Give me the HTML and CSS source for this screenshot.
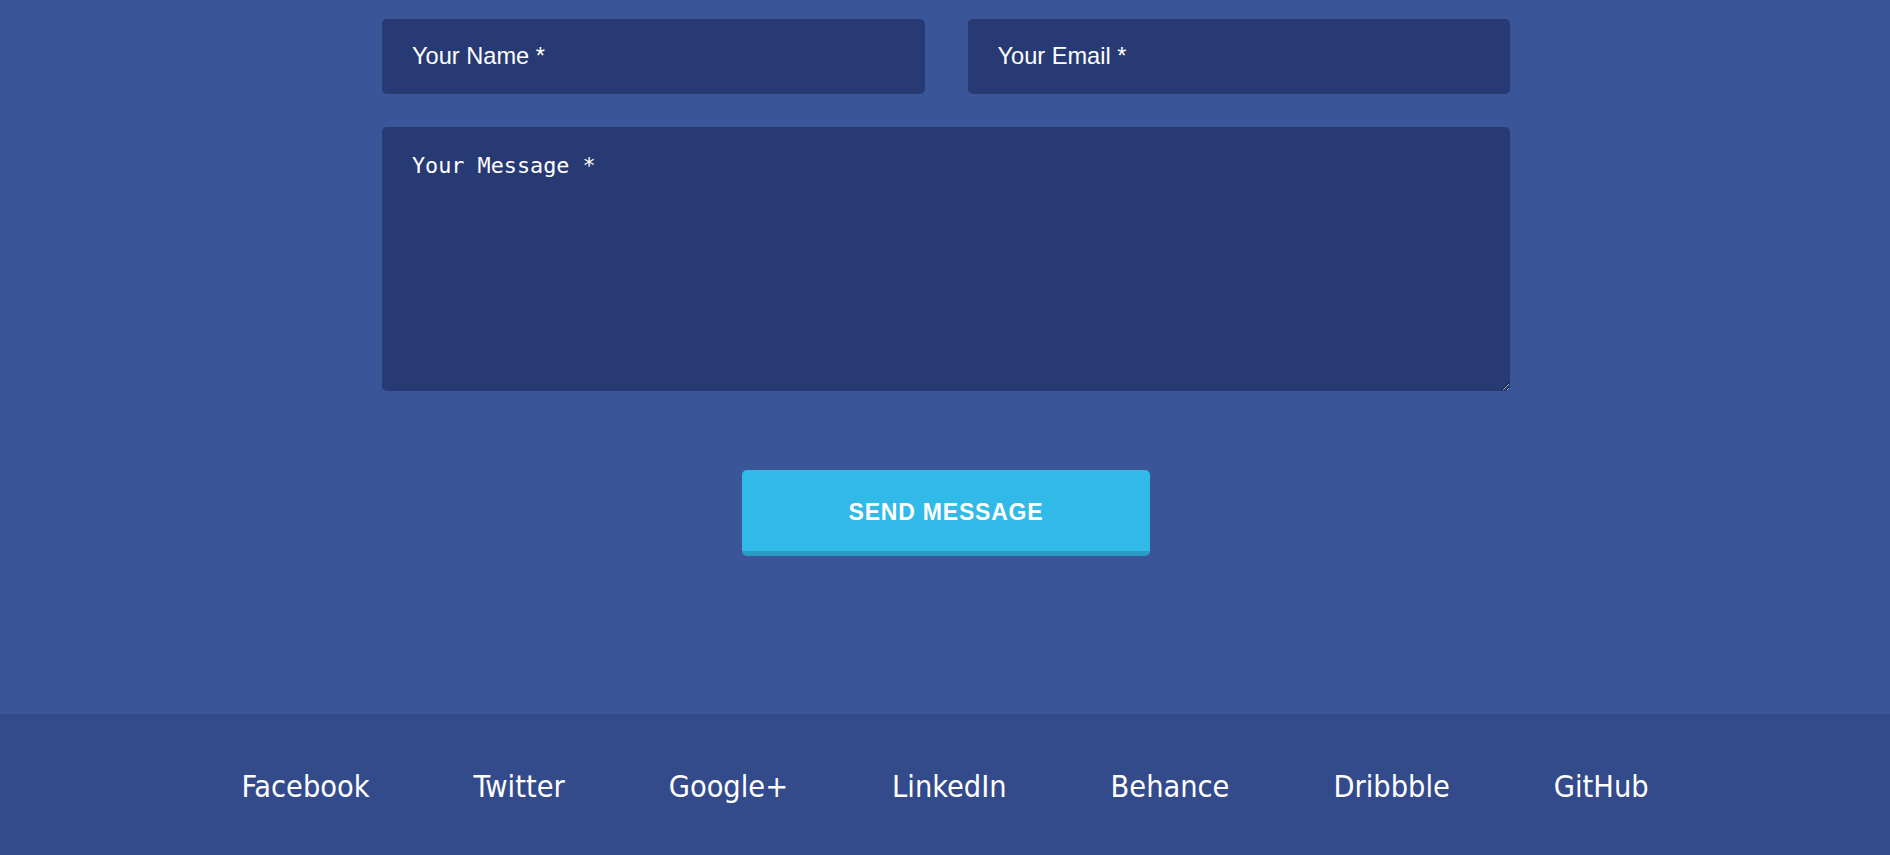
FILE: index.html
```html
<!DOCTYPE html>
<html lang="en">
<head>
<meta charset="utf-8">
<title>Contact</title>
<link rel="stylesheet" href="styles.css">
</head>
<body>
<main class="contact">
  <form class="contact-form">
    <div class="row">
      <input class="field" type="text" placeholder="Your Name *">
      <input class="field" type="email" placeholder="Your Email *">
    </div>
    <textarea class="message" placeholder="Your Message *"></textarea>
    <div class="actions">
      <button class="send" type="button">SEND MESSAGE</button>
    </div>
  </form>
</main>
<footer class="footer">
  <nav class="social">
    <a href="#">Facebook</a>
    <a href="#">Twitter</a>
    <a href="#">Google+</a>
    <a href="#">LinkedIn</a>
    <a href="#">Behance</a>
    <a href="#">Dribbble</a>
    <a href="#">GitHub</a>
  </nav>
</footer>
</body>
</html>
```
FILE: styles.css
```css
html, body {
  margin: 0;
  padding: 0;
}
body {
  background: #3b5599;
  font-family: "Liberation Sans", Arial, sans-serif;
  color: #fff;
  width: 1890px;
  height: 855px;
  overflow: hidden;
}
.contact {
  height: 714px;
  box-sizing: border-box;
  padding: 19px 0 0 2px;
}
.contact-form {
  width: 1128px;
  margin: 0 auto;
  display: flex;
  flex-direction: column;
}
.row {
  display: flex;
  gap: 43px;
}
.field {
  flex: 1;
  min-width: 0;
  height: 75px;
  box-sizing: border-box;
  border: none;
  border-radius: 5px;
  background: #283a73;
  color: #fff;
  padding: 0 30px;
  font-family: "Liberation Sans", Arial, sans-serif;
  font-size: 23.6px;
  outline: none;
}
.field::placeholder,
.message::placeholder {
  color: #fff;
  opacity: 1;
}
.message {
  margin-top: 33px;
  height: 264px;
  box-sizing: border-box;
  border: none;
  border-radius: 5px;
  background: #283a73;
  color: #fff;
  padding: 26px 30px;
  font-family: "DejaVu Sans Mono", monospace;
  font-size: 21.8px;
  outline: none;
}
.actions {
  display: flex;
  justify-content: center;
  margin-top: 79px;
}
.send {
  width: 408px;
  height: 86px;
  box-sizing: border-box;
  border: none;
  border-bottom: 5px solid #2a9dc7;
  border-radius: 5px;
  background: #31b9e8;
  color: #fff;
  font-family: "Liberation Sans", Arial, sans-serif;
  font-weight: bold;
  font-size: 23px;
  letter-spacing: 0.8px;
  padding: 3px 0 0;
  cursor: pointer;
}
.footer {
  height: 141px;
  background: #344b8b;
  display: flex;
  align-items: center;
  justify-content: center;
}
.social {
  display: flex;
  gap: 104px;
  padding-top: 3px;
}
.social a {
  color: #fff;
  text-decoration: none;
  font-family: "Liberation Sans Narrow", "DejaVu Sans Condensed", Roboto, sans-serif;
  font-size: 30.4px;
}
```
